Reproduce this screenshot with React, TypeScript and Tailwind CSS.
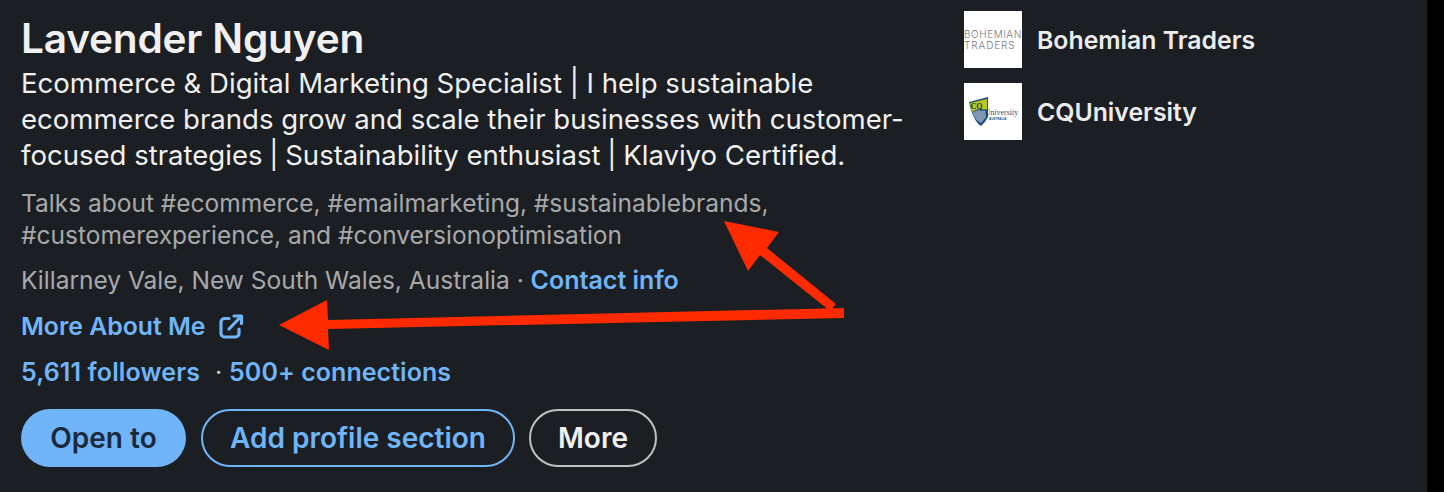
export default function App() {
  return (
    <div className="relative flex h-[492px] w-[1444px] overflow-hidden bg-black font-['Inter',sans-serif]">
      <div className="flex h-full w-[1427px] bg-[#1b1f23]">
        <div className="flex w-[943px] flex-col pl-[21px]">
          <h1 className="mt-[15px] text-[40.6px] leading-[48px] font-semibold tracking-[-0.2px] whitespace-nowrap text-[#f0f0f0]">Lavender Nguyen</h1>
          <p className="mt-[2px] w-[910px] text-[27.55px] leading-[36px] whitespace-nowrap text-[#f0f0f0]">
            Ecommerce &amp; Digital Marketing Specialist | I help sustainable
            <br />
            ecommerce brands grow and scale their businesses with customer-
            <br />
            focused strategies <span className="-mx-[1px]">|</span> Sustainability enthusiast <span className="-mx-[1px]">|</span> Klaviyo Certified.
          </p>
          <p className="mt-[14px] text-[24.5px] leading-[32px] whitespace-nowrap text-[#a8a9ab]">
            Talks about #ecommerce, #emailmarketing, #sustainablebrands,
            <br />
            #customerexperience, and #conversionoptimisation
          </p>
          <p className="mt-[13px] text-[24.5px] leading-[32px] whitespace-nowrap text-[#a8a9ab]">
            Killarney Vale, New South Wales, Australia ·{" "}
            <span className="text-[25px] font-semibold text-[#70b5f9]">Contact info</span>
          </p>
          <div className="mt-[14px] flex items-center gap-[13px] text-[24.8px] leading-[32px] font-semibold text-[#70b5f9]">
            <span>More About Me</span>
            <svg className="shrink-0" width="25" height="25" viewBox="0 0 25 25" fill="none" stroke="currentColor" strokeWidth="3.2" strokeLinecap="round" strokeLinejoin="round">
              <path d="M10 4.5H5.5A3.5 3.5 0 0 0 2 8v11.5A3.5 3.5 0 0 0 5.5 23H16.5a3.5 3.5 0 0 0 3.5-3.5V15" />
              <path d="M15 2H22.5v7.5" />
              <path d="M22 2.5 10 15" />
            </svg>
          </div>
          <div className="mt-[14px] flex text-[25px] leading-[32px] font-semibold text-[#70b5f9]">
            <span className="tracking-[0.13px]">5,611 followers</span>
            <span className="ml-[15px] w-[14px] font-normal text-[#d0d0d0]">·</span>
            <span className="tracking-[0.05px]">500+ connections</span>
          </div>
          <div className="mt-[21px] flex gap-[15px] text-[28px] font-semibold">
            <button className="flex h-[58px] w-[165px] items-center justify-center rounded-full bg-[#70b5f9] text-[#1b2a3d]">Open to</button>
            <button className="flex h-[58px] w-[314px] items-center justify-center rounded-full border-2 border-[#70b5f9] text-[#70b5f9]">Add profile section</button>
            <button className="-ml-[1px] flex h-[58px] w-[128px] items-center justify-center rounded-full border-2 border-[#c0c0c0] text-[#f0f0f0]">More</button>
          </div>
        </div>
        <div className="ml-[21px] flex flex-col gap-[15px] pt-[11px]">
          <div className="flex items-center gap-[15px]">
            <div className="flex h-[57px] w-[58px] flex-col justify-center overflow-hidden bg-white pt-[1px] text-[10px] leading-[11px] font-light whitespace-nowrap text-[#77787a]">
              <span className="tracking-[0.55px]">BOHEMIAN</span>
              <span className="tracking-[0.9px]">TRADERS</span>
            </div>
            <span className="pt-[2px] text-[24.8px] font-semibold text-[#ececec]">Bohemian Traders</span>
          </div>
          <div className="flex items-center gap-[15px]">
            <div className="flex h-[57px] w-[58px] items-center overflow-hidden bg-white">
              <svg width="58" height="57" viewBox="0 0 58 57">
                <path d="M5 19 L24 14 L24 34 Q21 40 17 43 Q9 38 5 19 Z" fill="#1d4f7c" />
                <path d="M6 20 L23 16 L23 27 Q14 24 8 29 Z" fill="#bcc817" />
                <path d="M8 30 Q14 25 22 28 L22 34 Q19 38 17 40 Q11 37 8 30 Z" fill="#7f97b5" />
                <text x="6.5" y="26" fontSize="8" fontWeight="700" fontFamily="Liberation Serif, serif" fill="#123a5e">CQ</text>
                <text x="20.5" y="32" fontSize="8" fontFamily="Liberation Serif, serif" fill="#1d4f7c">University</text>
                <text x="25" y="36.5" fontSize="3" fontWeight="700" fontFamily="Liberation Sans, sans-serif" fill="#1d4f7c">AUSTRALIA</text>
              </svg>
            </div>
            <span className="pt-[2px] text-[24.8px] font-semibold text-[#ececec]">CQUniversity</span>
          </div>
        </div>
      </div>
      <svg className="pointer-events-none absolute top-0 left-0" width="1444" height="492" viewBox="0 0 1444 492">
        <path d="M844 308 L844 318 L328 329 L329 350 L279 325 L327 300 L328 320 Z" fill="#ff2a00" />
        <path d="M836 304 L830 311 L760 255 L748 271 L724 221 L779 232 L767 248 Z" fill="#ff2a00" />
      </svg>
    </div>
  );
}
